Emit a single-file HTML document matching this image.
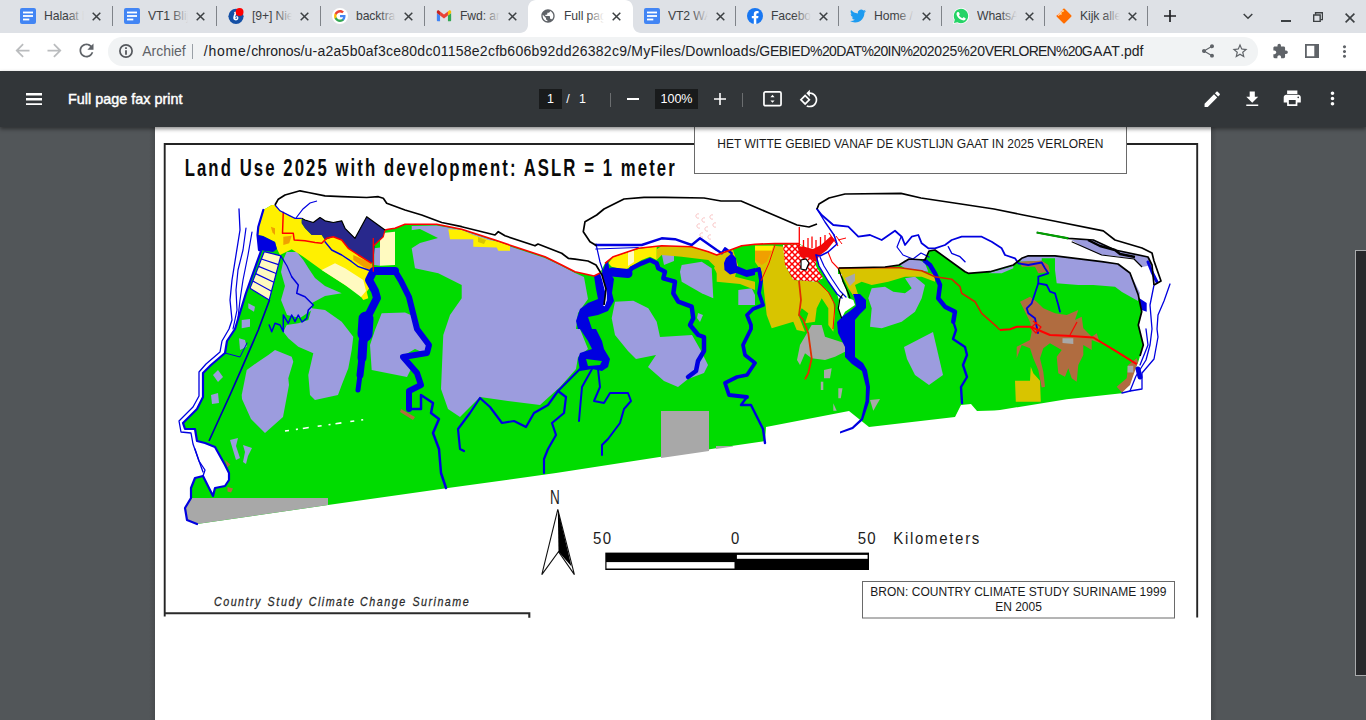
<!DOCTYPE html>
<html lang="nl">
<head>
<meta charset="utf-8">
<title>Full page fax print</title>
<style>
html,body{margin:0;padding:0}
body{width:1366px;height:720px;overflow:hidden;position:relative;background:#525659;font-family:"Liberation Sans",sans-serif}
.abs{position:absolute}
#tabstrip{position:absolute;left:0;top:0;width:1366px;height:33px;background:#dee1e6}
#toolbar{position:absolute;left:0;top:33px;width:1366px;height:38px;background:#fff}
#pdfbar{position:absolute;left:0;top:71px;width:1366px;height:56px;background:#323639;box-shadow:0 2px 4px rgba(0,0,0,.45)}
.tab{position:absolute;top:0;height:33px}
.tab .fav{position:absolute;left:11.5px;top:8px;width:16px;height:16px}
.tab .tt{position:absolute;left:35.5px;top:8px;height:16px;line-height:16px;font-size:12.2px;color:#3c4043;white-space:nowrap;overflow:hidden;width:43px;letter-spacing:-0.1px}
.tab .tt:after{content:"";position:absolute;right:0;top:0;width:20px;height:16px;background:linear-gradient(90deg,rgba(222,225,230,0),#dee1e6 85%)}
.tab.act .tt:after{background:linear-gradient(90deg,rgba(255,255,255,0),#fff 85%)}
.tab .x{position:absolute;left:83.300px;top:12px;width:9px;height:9px}
.sep{position:absolute;top:6px;width:1px;height:20px;background:#7f8389}
#omni{position:absolute;left:108px;top:4px;width:1150px;height:28.600px;border-radius:14.300px;background:#f1f3f4}
#url{position:absolute;left:95.800px;top:0;height:28px;line-height:28px;font-size:14px;color:#202124;white-space:nowrap;transform-origin:0 50%}
#arch{position:absolute;left:34.200px;top:0;height:28px;line-height:28px;font-size:14px;color:#5f6368;white-space:nowrap;transform-origin:0 50%}
#ptitle{position:absolute;left:68px;top:0;height:56px;line-height:57px;font-size:14.4px;color:#fff;white-space:nowrap;transform-origin:0 50%;-webkit-text-stroke:0.45px #fff}
.pbox{position:absolute;top:18px;height:20px;background:#191b1c;color:#fff;font-size:12.5px;line-height:20px;text-align:center}
.ptxt{position:absolute;top:18px;height:20px;color:#fff;font-size:12.5px;line-height:20px}
.psep{position:absolute;top:21.5px;width:1px;height:14px;background:#6b6e70}
svg{display:block}
</style>
</head>
<body>
<svg class="abs" style="left:0;top:0" width="1366" height="720" viewBox="0 0 1366 720">
<defs><linearGradient id="psh" x1="0" x2="1"><stop offset="0" stop-color="#3e4144"/><stop offset="1" stop-color="#525659"/></linearGradient><pattern id="hatch" width="6" height="6" patternUnits="userSpaceOnUse"><rect width="6" height="6" fill="#fff"/><path d="M0 0L6 6M0 6L6 0" stroke="#f00" stroke-width="1.500"/></pattern></defs>
<rect x="1211" y="127" width="6" height="593" fill="url(#psh)" opacity=".6"/>
<rect x="149" y="127" width="6" height="593" fill="url(#psh)" opacity=".5" transform="translate(304 0) scale(-1 1)"/>
<rect x="155" y="120" width="1056" height="600" fill="#fff"/>
<path d="M164.700 616.500V144H1197.200V617.500" fill="none" stroke="#242424" stroke-width="1.900"/>
<path d="M164.100 613.300H529.300V617.800" fill="none" stroke="#2a2a2a" stroke-width="2.100"/>
<polygon points="263.3,210 271.7,205 275,205 280,210.8 290,215.8 295,218.3 301.7,218.3 305,220 313.3,222.5 320,217.5 325,220.8 333.3,222.5 341.7,220.8 345,228.3 355,238.3 366.7,216.7 385,230 388.3,229.2 395,228.3 405,224.2 436.7,224.2 461.7,229.2 495,240 511.7,245.8 545,256.7 561.7,265 575,271.7 594,276 600,273 605,263.3 613.3,256.7 638.3,248.3 661.7,245.8 691.7,246.7 708.3,251.7 716.7,255 728.3,250.8 741.7,245.8 755,244.2 775,243.5 799,243.6 829,261 839,268 885,267 899,265 909,259 925,260 929,251 935,250 965,271.7 968.3,273.3 990,271.7 1013.3,265 1021.7,258.3 1028.3,255.8 1055,255.8 1101.7,261.7 1118,264 1130,273 1138.3,295 1141.7,311.7 1138.3,325 1143.3,345 1138.3,361.7 1133.3,373.3 1121.7,393.3 1066.7,399.2 1000,410 994,410.5 977,411 971,404 961,405 955,417 869,427 849,411 766,427 765,441 721,447.5 556,473 448,488 328,505 197,524 187,520 185,508 191,498 191,488 195,478 203,476 207,484 213,496 215,488 225,486 229,480 229,473 225,465 215,447 205,443 197,441 195,429 185,429 183,423 197,409 203,397 203,373 211,365 225,353 227,341 235,329 246,293 261,251 259,250 258,235 258,229" fill="#00dc00"/>
<polygon points="275,350 291.7,356.7 293.3,361.7 288.3,378.3 289,385 283,417 265,433 251,419 242,399 241.7,395 246.7,370 258.3,361.7 268.3,355" fill="#9c9cde"/>
<polygon points="311.7,308.3 325,310 341.7,321.7 353.3,336.7 351.7,350 348.3,368.3 341.7,385 338,395 315,400 310,395 308.3,375 313.3,353.3 298.3,346.7 288.3,338.3 283.3,331.7 286.7,325 298.3,323.3 308.3,320" fill="#9c9cde"/>
<polygon points="286.7,252 296.7,252 303.3,260 308.3,268 315,278 325,286 341.7,293.3 325,296 312,303 312,310 300,318 287,315 281,300 285,286 281,272 284,258" fill="#9c9cde"/>
<polygon points="381.7,313.3 405,312.5 413,316 417,329 429,345 429,355 415,349 401,357 411,369 407,377 371.7,370 370,345 375,330" fill="#9c9cde"/>
<polygon points="248.3,303.3 255,306.7 254,311.7 248.3,308.3" fill="#9c9cde"/>
<polygon points="241.7,320 250,319 250,326.7 241.7,328.3" fill="#9c9cde"/>
<polygon points="239,338.3 245,340 246.7,346.7 240,350" fill="#9c9cde"/>
<polygon points="411.7,226 436.7,225.5 461.7,230 495,241 511.7,247 545,258 561.7,266 575,273 584,277 588,299 578,313 576,329 580,329 588,349 578,357 576,369 560,387 540,405 508,401 480,397 460,417 448,409 441,389 443,341 443.3,335 450,315 461.7,298.3 461.7,285 438.3,273.3 415,268.3 411.7,248.3" fill="#9c9cde"/>
<polygon points="615,301.7 633.3,300.8 648.3,308.3 656.7,321.7 660,337 692,335 700,349 708,365 704,373 688,379 678,387 664,381 648,367 656,355 636,359 628,351 615,335 611.7,318.3" fill="#9c9cde"/>
<polygon points="681.7,265 701.7,261.7 711.7,268.3 713.3,298.3 701.7,293.3 681.7,281.7 680,271.7" fill="#9c9cde"/>
<polygon points="662,255 674,255 674,261 664,265" fill="#9c9cde"/>
<polygon points="738.3,290 751.7,288.3 755,295 755,305 738.3,305" fill="#9c9cde"/>
<polygon points="698,313 703,315 700,322 697,318" fill="#9c9cde"/>
<polygon points="871.7,288.3 885,286.7 893.3,291.7 905,293.3 911.7,288.3 905,278.3 915,276.7 925,285 921.7,298.3 915,311.7 901.7,321.7 881.7,328.3 870,326.7 871.7,308.3 868.3,298.3" fill="#9c9cde"/>
<polygon points="900,265 905,260 918.3,259.2 925,263.3 928.3,271.7 905,268.3" fill="#9c9cde"/>
<polygon points="904,347 933,332 943,375 929,385 915,375 907,359" fill="#9c9cde"/>
<polygon points="1021.7,258.3 1028.3,256 1055,256 1101.7,261.7 1118,264 1130,273 1140,293 1138,301 1122,292 1115,286.7 1093.3,285 1078.3,285 1056.7,283.3 1055,270 1055,258.3 1041.7,258.3 1041.7,260.8 1020,261.7" fill="#9c9cde"/>
<polygon points="988.3,273.3 1013.3,266 1013.3,268.3 1001.7,273.3" fill="#9c9cde"/>
<polygon points="1068.3,238.3 1071.7,240 1093.3,240 1115,250 1148,257 1152,265 1142,267 1134,259 1115,256 1101.7,255 1085,248" fill="#9c9cde"/>
<polygon points="213,375 218,370 223,377 218,382" fill="#9c9cde"/>
<polygon points="211,395 218,393 219,403 212,404" fill="#9c9cde"/>
<polygon points="398,232 420,229 438,238 420,243 411.7,248.3 405,240" fill="#00dc00"/>
<polygon points="230,440 238,438 236,446 240,458 236,460 233,450" fill="#9c9cde"/>
<polygon points="243,445 252,448 248,456 246,464 243,462 245,452" fill="#9c9cde"/>
<polygon points="224.7,459.7 230.3,464.4 227.5,467.2" fill="#b06c40"/>
<polygon points="227.5,486.9 233,488.5 231,492.5 227.5,491.5" fill="#b06c40"/>
<polygon points="401,409 415,417 413,420 400,412" fill="#b06c40"/>
<polyline points="285,431 368,419" fill="none" stroke="#fff" stroke-width="1.6" stroke-dasharray="4 7 2 5 6 9"/>
<polygon points="191,498 328,498 328,505 197,524 187,520 185,508" fill="#a8a8a8"/>
<polygon points="661,411 709,411 709,451 661,458" fill="#a8a8a8"/>
<polygon points="716,446 733,446 733,446.5 716,449" fill="#a8a8a8"/>
<polygon points="800,345 811.7,325 821.7,325 825,336.7 845,343.3 845,351.7 835,356.7 825,360 811.7,358.3 805,353.3 800,365 797,360" fill="#a8a8a8"/>
<polygon points="824,370 831.7,368.3 830,378.3 824,378.3" fill="#a8a8a8"/>
<polygon points="838.3,388.3 842.5,388.3 840.8,398.3 838.3,398.3" fill="#a8a8a8"/>
<polygon points="820.8,381.7 823.3,381.7 823.3,390 820.8,390" fill="#a8a8a8"/>
<polygon points="833.3,403.3 836.7,410.8 833.3,410.8" fill="#a8a8a8"/>
<polygon points="870,400 880,399 873.3,410.8" fill="#a8a8a8"/>
<polygon points="755,245.8 773.3,245.8 785,246.7 785,265 793.3,280 816.7,281.7 826.7,290 833.3,301.7 835,315 833.3,331.7 828.3,325 828.3,308.3 821.7,298.3 816.7,308.3 815,321.7 805,323.3 808.3,313.3 801.7,308.3 798.3,315 805,331.7 796.7,330 793.3,321.7 771.7,328.3 766.7,315 763.3,285 761.7,271.7 755,262" fill="#d8c400"/>
<polygon points="721,255 727,262 721,268 728,276 721,281 714,268" fill="#d8c400"/>
<polygon points="656.7,249.2 661.7,246 691.7,247 708.3,252 716.7,255.5 728.3,251.5 733,250 738,265 735,276.7 755,281.7 755,290 740,284 716.7,281.7 716.7,268.3 708.3,260 681.7,256.7 661.7,255 656.7,260" fill="#d8c400"/>
<polygon points="838.3,268.5 898.3,267.5 921.7,270.8 935,275 935,281.7 921.7,276.7 905,276.7 888.3,281.7 871.7,285 861.7,281.7 855,285 858.3,295 855,298.3 848.3,288.3 843.3,278.3" fill="#d8c400"/>
<polygon points="1015,380.8 1030,380.8 1030.8,366.7 1033.3,373.3 1040,380.8 1040.8,401.7 1015.8,401.7" fill="#d8c400"/>
<polygon points="736,249 751.7,246.7 751.7,260 741,265 738,262" fill="#00dc00"/>
<polygon points="755,245.8 773.3,245.8 771.7,250.8 755,250.8" fill="#fff000"/>
<polygon points="755,250.8 771.7,250.8 766.7,261.7 761.7,265 755,260" fill="#f0a000"/>
<polygon points="845,278 855,273.5 855,281 850,286" fill="#a8a8a8"/>
<polygon points="1020,261.7 1041.7,260.8 1048.3,265 1050,271.7 1038.3,273.3 1035,266.7 1021.7,266.7" fill="#b06c40"/>
<polygon points="1020,301.7 1030,296.7 1036.7,301.7 1043.3,308.3 1055,313.3 1066.7,315 1078.3,310 1075,320 1081.7,316.7 1083.3,328.3 1091.7,336.7 1096.7,333.3 1100,343.3 1091.7,340 1091.7,350 1083.3,345 1083.3,355 1078.3,365 1076.7,381.7 1071.7,378.3 1068.3,368.3 1065,376.7 1058.3,373.3 1056.7,356.7 1061.7,350 1050,343.3 1043.3,348.3 1040,358.3 1043.3,371.7 1045,386.7 1041.7,387.5 1038.3,370 1033.3,358.3 1030,348.3 1021.7,345 1016.7,358.3 1016.7,346.7 1030,340 1031.7,331.7 1030,322 1025,311.7" fill="#b06c40"/>
<polygon points="1116.7,386.7 1126.7,378.3 1128.3,365 1136.7,358.3 1138,362 1130,385 1122,392.5" fill="#b06c40"/>
<polygon points="1127.5,365.8 1133.3,365.8 1133.3,372.5 1127.5,372.5" fill="#a8a8a8"/>
<polygon points="1062.5,338.3 1073.3,338.3 1073.3,344 1062.5,343" fill="#a8a8a8"/>
<polygon points="271.7,205 275,205 280,210.8 290,215.8 295,218.3 301.7,218.3 301.7,223.3 305,228.3 311.7,235 321.7,235 325,240 333.3,236.7 341.7,240 348.3,248.3 358.3,255 371.7,263.3 373.3,271.7 366.7,278.3 371.7,285 366.7,291.7 368.3,298.3 363.3,300 358.3,293.3 345,285 321.7,270 303.3,256.7 291.7,249.2 280,255 276.7,248.3 275,242 263,236 257.5,235 258.3,226.7 263.3,210" fill="#fff000"/>
<polygon points="321.7,270 335,263.3 345,268.3 363.3,280 366,291 361,297 345,285" fill="#fffac0"/>
<polygon points="380,233.3 395,231.7 395,265 380,265.8" fill="#fffac0"/>
<polygon points="374.2,248.3 380,247.5 380,265.8 374.2,265" fill="#9c9cde"/>
<polygon points="283.3,236.7 291.7,235.8 289.2,243.3 283.3,245" fill="#f0a000"/>
<polygon points="270.8,226.7 275,228.3 275,235 272.5,232.5" fill="#f0a000"/>
<polygon points="353.3,255 371.7,263.3 372.5,271.7 363.3,266.7 353.3,260" fill="#f0a000"/>
<polygon points="264.2,251.7 280.8,255.8 269.2,300 250,288.3" fill="#fffac0"/>
<polygon points="301.7,219.2 305,220 313.3,222.5 320,217.5 325,220.8 333.3,222.5 341.7,220.8 345,228.3 355,238.3 366.7,216.7 385,230 383.3,236.7 375,245 373.3,261.7 371.7,263.3 358.3,255 348.3,248.3 341.7,240 333.3,236.7 325,240 321.7,235 311.7,235 305,228.3 301.7,223.3" fill="#28288c"/>
<polygon points="258,235 263,236 275,242 277,249 273,252 259,250" fill="#0000e0"/>
<polygon points="448.3,229.2 461.7,230 473.3,235 488.3,240 498.3,241.7 510,245.8 510,250.8 498.3,250.8 496.7,247.5 473.3,246.7 473.3,239.2 450,239.2" fill="#fff000"/>
<polygon points="478,237 486,240 484,244 478,242" fill="#d8c400"/>
<polygon points="608.3,263.3 613.3,257 638.3,249 656.7,246.5 656.7,260 650,256.7 641.7,260 625,270 611.7,266.7" fill="#fff000"/>
<polygon points="628,252 634,250.5 634,262 628,266" fill="#fffac0"/>
<polygon points="800,243 836,233 840,268 838,267 838,274 842,274 842,281 846,289 848,298 853.3,300 855,305 845,311.7 841.7,318.3 838.3,308.3 839,300 837,294 828,281 819,266 816,253 811,249" fill="#fff"/>
<polygon points="783,245 799,244 816,253 816,266 823,278 816.7,281.7 793.3,280 785,265" fill="url(#hatch)"/>
<polygon points="797,246 805,247 813,249 821,245 831,236 835,240 827,250 819,256 816,262 809,257.5 801,257.5" fill="#f00808"/>
<polyline points="799.3,227 799.3,246" fill="none" stroke="#ff0000" stroke-width="1.3" />
<polyline points="803.5,240 803.5,248" fill="none" stroke="#ff0000" stroke-width="1.3" />
<polyline points="808,238 808,248" fill="none" stroke="#ff0000" stroke-width="1.3" />
<polyline points="812,236.5 812,248" fill="none" stroke="#ff0000" stroke-width="1.3" />
<polyline points="816,240 816,250" fill="none" stroke="#ff0000" stroke-width="1.3" />
<polyline points="820.5,237 820.5,247" fill="none" stroke="#ff0000" stroke-width="1.3" />
<polyline points="825,235 825,244" fill="none" stroke="#ff0000" stroke-width="1.3" />
<polyline points="829,233 838,246" fill="none" stroke="#ff0000" stroke-width="1.1" />
<polyline points="836,236 842,244" fill="none" stroke="#ff0000" stroke-width="1.0" />
<polyline points="838,240 846,238" fill="none" stroke="#ff0000" stroke-width="1.0" />
<polyline points="828,252 832,262 838.3,268.5" fill="none" stroke="#ff0000" stroke-width="1.1" />
<polygon points="801,260 806,259 809,263 806,270 801,269" fill="#fff" stroke="#000" stroke-width="1.2"/>
<polyline points="264.2,251.7 280.8,255.8" fill="none" stroke="#0000e0" stroke-width="1.2" />
<polyline points="261.36,259.02 278.48,264.64" fill="none" stroke="#0000e0" stroke-width="1.2" />
<polyline points="258.52,266.34 276.16,273.48" fill="none" stroke="#0000e0" stroke-width="1.2" />
<polyline points="255.68,273.66 273.84,282.32" fill="none" stroke="#0000e0" stroke-width="1.2" />
<polyline points="252.84,280.98 271.52,291.16" fill="none" stroke="#0000e0" stroke-width="1.2" />
<polyline points="250,288.3 269.2,300" fill="none" stroke="#0000e0" stroke-width="1.2" />
<polyline points="264.2,251.7 250,288.3" fill="none" stroke="#0000e0" stroke-width="1.2" />
<polyline points="280.8,255.8 269.2,300" fill="none" stroke="#0000e0" stroke-width="1.2" />
<polyline points="263.3,210 258.3,226.7 257.5,235 259,250 261,251 246,293 235,329 227,341 225,353 211,365 203,373 203,397 197,409 183,423 185,429 195,429 197,441 205,443 215,447 225,465 229,473 229,480 225,486 215,488 213,496 207,484 203,476 195,478 191,488 191,498 185,508 187,520 197,524" fill="none" stroke="#0000e0" stroke-width="2.2" stroke-linejoin="round" stroke-linecap="round"/>
<polyline points="239,209 240,230 236,255 232,280 230,300 232,320 229,329 222,341 220,352 206,364 199,372 199,396 193,407 179,421 181,432 191,433 193,444 199,461 203,472" fill="none" stroke="#0000e0" stroke-width="1.3" stroke-linejoin="round" stroke-linecap="round"/>
<polyline points="246,228 243,250 238,270 236,290 237,310 233,329" fill="none" stroke="#0000e0" stroke-width="1.2" stroke-linejoin="round" stroke-linecap="round"/>
<polyline points="252,232 248,255 243,280 240,300 238,318" fill="none" stroke="#0000e0" stroke-width="1.2" stroke-linejoin="round" stroke-linecap="round"/>
<polyline points="195,449 199,461 205,470 203,476" fill="none" stroke="#0000e0" stroke-width="1.3" stroke-linejoin="round" stroke-linecap="round"/>
<polyline points="269.5,300 258.3,330 241.7,368.3 230,395 209,441" fill="none" stroke="#0000b4" stroke-width="1.7" />
<polyline points="225,353 240,357 247,343" fill="none" stroke="#0000e0" stroke-width="1.0" stroke-linejoin="round" stroke-linecap="round"/>
<polyline points="365,333 363,342 362,358" fill="none" stroke="#0000e0" stroke-width="9" stroke-linejoin="round" stroke-linecap="round"/>
<polyline points="362,358 360,375" fill="none" stroke="#0000e0" stroke-width="7" stroke-linejoin="round" stroke-linecap="round"/>
<polyline points="360,375 358,390" fill="none" stroke="#0000e0" stroke-width="5" stroke-linejoin="round" stroke-linecap="round"/>
<polyline points="373,272 369,280 375,291 377,298 372,308 366,320" fill="none" stroke="#0000e0" stroke-width="8" stroke-linejoin="round" stroke-linecap="round"/>
<polyline points="366,319 365,334" fill="none" stroke="#0000e0" stroke-width="15" stroke-linejoin="round" stroke-linecap="round"/>
<polyline points="374,271 395,271" fill="none" stroke="#0000e0" stroke-width="8" stroke-linejoin="round" stroke-linecap="round"/>
<polyline points="395,271 401,281 409,297 413,313 417,329 429,345 427,353 403,357 417,373 421,385 409,391 409,409" fill="none" stroke="#0000e0" stroke-width="6" stroke-linejoin="round" stroke-linecap="round"/>
<polyline points="409,409 421,409 421,395 433,403 431,413 439,419 433,433 439,449 441,473 446,488" fill="none" stroke="#0000e0" stroke-width="2.5" stroke-linejoin="round" stroke-linecap="round"/>
<polyline points="325,241.7 331.7,250 341.7,255 351.7,261.7 358.3,266.7 368.3,270 372,271" fill="none" stroke="#0000e0" stroke-width="1.4" stroke-linejoin="round" stroke-linecap="round"/>
<polyline points="291.7,276.7 298.3,285 296.7,293.3 305,296.7 313.3,305 308.3,310 306.7,318.3 302,322 298.3,315 295,321.7 291.7,315 288.3,323.3 283.3,315 283.3,331.7 280,325 275,323.3 271.7,331.7 269.2,325" fill="none" stroke="#0000e0" stroke-width="1.5" stroke-linejoin="round" stroke-linecap="round"/>
<polyline points="280.8,255.8 287,266 291.7,276.7" fill="none" stroke="#0000e0" stroke-width="1.3" stroke-linejoin="round" stroke-linecap="round"/>
<polygon points="606,262 608,261 610,273 614,279 612,293 614,301 608,311 598,315 588,317 592,329 596,329 602,341 604,349 610,359 608,367 602,371 592,369 580,371 578,359 580,353 592,349 588,341 580,329 578,329 576,321 580,309 588,303 598,299 596,289 594,276 602,273" fill="#0000e0"/>
<polygon points="586,359 602,361 600,365 588,366" fill="#00dc00"/>
<polyline points="599,267 603,280 606,292 606,300 604,306" fill="none" stroke="#fff" stroke-width="1.6" />
<polyline points="580,369 568,381 558,391 548,405 534,413 526,427 514,421 502,423 490,407 480,398 470,413 458,429 460,449 464,451" fill="none" stroke="#0000e0" stroke-width="2.2" stroke-linejoin="round" stroke-linecap="round"/>
<polyline points="566,397 564,413 552,423 556,435 548,449 544,459 544,473" fill="none" stroke="#0000e0" stroke-width="2.2" stroke-linejoin="round" stroke-linecap="round"/>
<polyline points="558,391 566,397" fill="none" stroke="#0000e0" stroke-width="2.2" stroke-linejoin="round" stroke-linecap="round"/>
<polyline points="592,369 582,387 580,409 579,421" fill="none" stroke="#0000e0" stroke-width="2" stroke-linejoin="round" stroke-linecap="round"/>
<polyline points="598,369 600,387 594,401 604,403 610,393 628,393 631,401 624,409 620,423 608,439 602,445 602,455" fill="none" stroke="#0000e0" stroke-width="2" stroke-linejoin="round" stroke-linecap="round"/>
<polyline points="612,272 628,273.5" fill="none" stroke="#0000e0" stroke-width="9" stroke-linejoin="round" stroke-linecap="round"/>
<polyline points="628.3,273.3 631.7,268.3 641.7,263.3 650,260 656.7,263.3 658.3,268.3 665,271.7 663.3,278.3 675,281.7 673.3,293.3 678.3,301.7 691.7,306.7 693.3,318.3 690,325 698.3,335 704,337 704,351 698,361 696,371 688,377" fill="none" stroke="#0000e0" stroke-width="4.5" stroke-linejoin="round" stroke-linecap="round"/>
<polyline points="595.8,245 641.7,245 661.7,238.3 675,239.2 691.7,245 700,238.3 716.7,250 721.7,253.3 725,248.3 731.7,253.3" fill="none" stroke="#0000e0" stroke-width="2.4" stroke-linejoin="round" stroke-linecap="round"/>
<polyline points="595.8,249 638.3,247.5" fill="none" stroke="#0000e0" stroke-width="1.2" stroke-linejoin="round" stroke-linecap="round"/>
<polyline points="596,244 600,262 606,280" fill="none" stroke="#0000e0" stroke-width="1.2" stroke-linejoin="round" stroke-linecap="round"/>
<polyline points="746.7,273.5 759,269 761,281 759,293 763,305 753,309 747,315 751,325 751,329 743,345 745,355 755,363 747,375 737,377 725,383 729,395 747,397" fill="none" stroke="#0000e0" stroke-width="3.8" stroke-linejoin="round" stroke-linecap="round"/>
<polyline points="747,397 741,405 751,405 757,417 763,429 765,443" fill="none" stroke="#0000e0" stroke-width="2.4" stroke-linejoin="round" stroke-linecap="round"/>
<polygon points="726,258 731.7,253.3 736,258 737,266 746.7,270 755,268 755,275 746.7,277 736,273 730,274.5 724.5,270 724,263" fill="#0000e0"/>
<polygon points="853,294 860,294 866,300 866,308 860,314 855,320 855,333 855,347 855,357 863,363 867,370 870,387 869,402 863,420 853,429 840,433.5 840,431.5 852,427 861,418.5 865.5,401 866,387 862,371 852,364 845,357 845,347 838,333 837,322 843,316 850,311 856,306 855,300" fill="#0000e0"/>
<polyline points="816,255 819,266 828,281 837,294 842,298" fill="none" stroke="#0000e0" stroke-width="1.4" stroke-linejoin="round" stroke-linecap="round"/>
<polyline points="820,257 824,266 832,279 840,291 846,297" fill="none" stroke="#0000e0" stroke-width="1.2" stroke-linejoin="round" stroke-linecap="round"/>
<polyline points="834,235 837,244 828,252 820,256 816,255" fill="none" stroke="#0000e0" stroke-width="1.6" stroke-linejoin="round" stroke-linecap="round"/>
<polyline points="817,209 825,222 834,235" fill="none" stroke="#0000e0" stroke-width="1.4" stroke-linejoin="round" stroke-linecap="round"/>
<polyline points="925,261 930,265 935,273.3 940,285 938.3,298.3 945,306.7 955,311.7 953.3,321.7" fill="none" stroke="#0000e0" stroke-width="4.5" stroke-linejoin="round" stroke-linecap="round"/>
<polyline points="953.3,321.7 956,330 953,339 965,347 967,355 963,365 967,377 961,387 962,403" fill="none" stroke="#0000e0" stroke-width="2.4" stroke-linejoin="round" stroke-linecap="round"/>
<polyline points="817,209 821.7,215 833.3,225 848.3,226.7 858.3,236.7 870,235 881.7,240 895,230.8 901.7,236.7 905,245 911.7,236.7 918.3,235 921.7,243.3 928.3,248.3 935,248.3 945,245 951.7,240 961.7,236.7 981.7,236.7 991.7,241.7 1001.7,248.3 1005,255 1015,258.3 1018.3,263.3 1028.3,265 1041.7,262.5 1045,268.3 1048.3,273.3 1038.3,276.7 1038.3,283.3 1046.7,285 1050,291.7 1055,293.3 1058.3,305 1060,311.7" fill="none" stroke="#0000e0" stroke-width="1.8" stroke-linejoin="round" stroke-linecap="round"/>
<polyline points="1038.3,283.3 1035,293.3 1031.7,303.3 1026.7,308.3 1028.3,313.3 1035,318.3 1036.7,326.7 1038,333" fill="none" stroke="#0000e0" stroke-width="1.8" stroke-linejoin="round" stroke-linecap="round"/>
<polyline points="901,237 897,247 903,255 913,259 921,253 929,257" fill="none" stroke="#0000e0" stroke-width="1.2" stroke-linejoin="round" stroke-linecap="round"/>
<polyline points="948.3,246.7 951.7,253.3 960,256.7 965,261.7" fill="none" stroke="#0000e0" stroke-width="1.4" stroke-linejoin="round" stroke-linecap="round"/>
<polyline points="1170,284 1164,301 1158,315 1157,329 1158,337 1154,359 1142,373 1142,389 1130,391 1122,393" fill="none" stroke="#0000e0" stroke-width="1.3" stroke-linejoin="round" stroke-linecap="round"/>
<polyline points="1154,285 1150,305 1152,329 1150,345 1146,360 1136,376 1130,391" fill="none" stroke="#0000e0" stroke-width="1.3" stroke-linejoin="round" stroke-linecap="round"/>
<polyline points="1146,329 1148,345 1140,365" fill="none" stroke="#0000e0" stroke-width="1.3" stroke-linejoin="round" stroke-linecap="round"/>
<polygon points="1139,298 1146.7,303 1146.7,311.7 1141.7,310" fill="#0000e0"/>
<polyline points="1138,369 1140,377" fill="none" stroke="#0000e0" stroke-width="5" stroke-linejoin="round" stroke-linecap="round"/>
<polyline points="1148,262 1152,272 1157,282" fill="none" stroke="#0000e0" stroke-width="3" stroke-linejoin="round" stroke-linecap="round"/>
<path d="M699 214a2.2 2.2 0 1 0 0 4" fill="none" stroke="#fbc8c8" stroke-width="1"/>
<path d="M705 218a2.2 2.2 0 1 0 0 4" fill="none" stroke="#fbc8c8" stroke-width="1"/>
<path d="M713 215a2.2 2.2 0 1 0 0 4" fill="none" stroke="#fbc8c8" stroke-width="1"/>
<path d="M700 224a2.2 2.2 0 1 0 0 4" fill="none" stroke="#fbc8c8" stroke-width="1"/>
<path d="M708 227a2.2 2.2 0 1 0 0 4" fill="none" stroke="#fbc8c8" stroke-width="1"/>
<path d="M716 223a2.2 2.2 0 1 0 0 4" fill="none" stroke="#fbc8c8" stroke-width="1"/>
<path d="M703 233a2.2 2.2 0 1 0 0 4" fill="none" stroke="#fbc8c8" stroke-width="1"/>
<path d="M711 235a2.2 2.2 0 1 0 0 4" fill="none" stroke="#fbc8c8" stroke-width="1"/>
<polyline points="385,230 388.3,229.2 395,228.3 405,224.2 436.7,224.2 461.7,229.2 495,240 511.7,245.8 545,256.7 561.7,265 575,271.7 594,276 600,273" fill="none" stroke="#ff0000" stroke-width="1.6" stroke-linejoin="round"/>
<polyline points="605,263.3 613.3,256.7 638.3,248.3 661.7,245.8 691.7,246.7 708.3,251.7 716.7,255 728.3,250.8 741.7,245.8 755,244.2 775,243.5 799,243.6" fill="none" stroke="#ff0000" stroke-width="1.6" stroke-linejoin="round"/>
<polyline points="838.3,268.3 898.3,267.5 921.7,270.8 935,276.7 951.7,279.2 960,286.7 961.7,293.3 975,301.7 981.7,313.3 996.7,326.7 1000,330" fill="none" stroke="#d02800" stroke-width="1.6" stroke-linejoin="round"/>
<polyline points="1000,330 1010,329.2 1016.7,326.7 1030,326.7 1038.3,330 1050,335 1066.7,335.8 1093.3,337.5 1116.7,351.7 1136.7,364.2" fill="none" stroke="#ff0000" stroke-width="2" stroke-linejoin="round"/>
<polyline points="1070,335 1077,322" fill="none" stroke="#ff0000" stroke-width="1.2" stroke-linejoin="round"/>
<polyline points="1033,321 1041,327 1036,333 1031,328 1037,322" fill="none" stroke="#ff0000" stroke-width="1.2" stroke-linejoin="round"/>
<polyline points="373.3,238 373.3,271.7" fill="none" stroke="#ff0000" stroke-width="1.3" stroke-linejoin="round"/>
<polyline points="373.3,246 383.3,236.7 385,230" fill="none" stroke="#ff0000" stroke-width="1.2" stroke-linejoin="round"/>
<polyline points="283.3,211.7 282.5,233.3 293.3,233.3 294.2,240 305,240.8 315,242.5 321.7,243.3 326.7,238.3 333.3,236.7 341.7,240 348.3,248.3 358.3,255 371.7,263.3" fill="none" stroke="#ff0000" stroke-width="1.5" stroke-linejoin="round"/>
<polyline points="775,245 769,263 761,281" fill="none" stroke="#ff0000" stroke-width="1.0" stroke-linejoin="round"/>
<polyline points="799,281 801,300 799,315 803.3,320 808.3,333.3 811.7,358.3 808.3,373.3 805,379.2" fill="none" stroke="#e03000" stroke-width="1.8" stroke-linejoin="round"/>
<polyline points="817,281 829,293 835,305 833,329" fill="none" stroke="#ff0000" stroke-width="1.0" stroke-linejoin="round"/>
<polyline points="301.7,218.3 305,220 313.3,222.5 320,217.5 325,220.8 333.3,222.5 341.7,220.8 345,228.3 355,238.3 366.7,216.7 385,230" fill="none" stroke="#000" stroke-width="1.2" stroke-linejoin="round"/>
<polyline points="275,205 280,210.8 290,215.8 295,218.3 301.7,218.3" fill="none" stroke="#0000e0" stroke-width="1.3" />
<polyline points="296,218 303,209 310,203 317,201" fill="none" stroke="#0000e0" stroke-width="1.2" />
<polyline points="275,205 278.3,199.2 285,195 300,190.8 308.3,192.5 325,195.8 341.7,196.7 366.7,197.5 378.3,196.7 383.3,198.3 386.7,203.3 405,210 421.7,215 441.7,222.5 461.7,226.7 495,235 498.3,231.7 505,235.8 535,245.8 538,244 561.7,253.3 568.3,258.3 575,259.2 588,261 596,265 602,275 606,289 604,305" fill="none" stroke="#000" stroke-width="1.7" stroke-linejoin="round"/>
<polyline points="596.7,245.8 590,241.7 583.3,231.7 585,221.7 596.7,215 604,209 624,199 644,197.4 664,197.4 704,198 721,201 741,201 769,213 797,225 809,227 817,224" fill="none" stroke="#000" stroke-width="1.7" stroke-linejoin="round"/>
<polyline points="817,209 819,204 829,198 845,194 901,193.4 921,198 961,204 994,209 1023.3,215 1054,221 1103.3,230.8 1115,240 1142,248 1152,253 1154,261 1161,281 1154,285" fill="none" stroke="#000" stroke-width="1.7" stroke-linejoin="round"/>
<polyline points="839,268 885,267 899,265 909,259 925,260 929,251 935,250 965,271.7 968.3,273.3 990,271.7 1013.3,265 1021.7,258.3 1028.3,255.8 1055,255.8 1101.7,261.7 1118,264 1130,273 1138.3,295 1141.7,311.7 1138.3,325 1143.3,345 1140,356" fill="none" stroke="#000" stroke-width="1.7" stroke-linejoin="round"/>
<polyline points="1036.7,232.5 1068.3,238.3 1093.3,240 1115,250 1148,257 1152,265 1154,285" fill="none" stroke="#000" stroke-width="1.7" stroke-linejoin="round"/>
<polyline points="1071.7,241.7 1101.7,255 1134,259 1142,267" fill="none" stroke="#000" stroke-width="1.2" stroke-linejoin="round"/>
<polyline points="1088,240 1100,246 1115,250 1120,254 1135,257" fill="none" stroke="#000" stroke-width="2.5" stroke-linejoin="round"/>
<polyline points="838.3,268.5 843.3,281.7 848.3,293.3 850,298.3" fill="none" stroke="#000" stroke-width="1.3" stroke-linejoin="round"/>
<polyline points="843,294 840,298.3 838.3,308.3 841.7,318.3" fill="none" stroke="#000" stroke-width="1.2" stroke-linejoin="round"/>
<polyline points="1036.7,232.5 1068.3,238.3" fill="none" stroke="#00a000" stroke-width="2.2" />
<text transform="translate(184.700 175.600) scale(0.700 1)" font-family="Liberation Sans, sans-serif" font-size="23.900" font-weight="bold" fill="#0a0a0a" textLength="700.0" lengthAdjust="spacing">Land Use 2025 with development: ASLR = 1 meter</text>
<rect x="694.500" y="120" width="432" height="53.500" fill="#fff" stroke="#6a6a6a" stroke-width="1"/>
<text x="717.200" y="147.700" font-family="Liberation Sans, sans-serif" font-size="12" fill="#1a1a1a" textLength="386.300" lengthAdjust="spacing">HET WITTE GEBIED VANAF DE KUSTLIJN GAAT IN 2025 VERLOREN</text>
<rect x="862.500" y="581.500" width="312" height="36.500" fill="#fff" stroke="#6a6a6a" stroke-width="1"/>
<text x="870.300" y="596.300" font-family="Liberation Sans, sans-serif" font-size="12" fill="#1a1a1a" textLength="296.100" lengthAdjust="spacing">BRON: COUNTRY CLIMATE STUDY SURINAME 1999</text>
<text x="1018.500" y="610.600" font-family="Liberation Sans, sans-serif" font-size="12" fill="#1a1a1a" text-anchor="middle">EN 2005</text>
<text transform="translate(214.0 606.200) scale(0.860 1)" font-family="Liberation Sans, sans-serif" font-size="12.500" font-style="italic" fill="#2a2a2a" stroke="#2a2a2a" stroke-width="0.250" textLength="54.0" lengthAdjust="spacing">Country</text>
<text transform="translate(267.4 606.200) scale(0.860 1)" font-family="Liberation Sans, sans-serif" font-size="12.500" font-style="italic" fill="#2a2a2a" stroke="#2a2a2a" stroke-width="0.250" textLength="39.8" lengthAdjust="spacing">Study</text>
<text transform="translate(308.7 606.200) scale(0.860 1)" font-family="Liberation Sans, sans-serif" font-size="12.500" font-style="italic" fill="#2a2a2a" stroke="#2a2a2a" stroke-width="0.250" textLength="52.7" lengthAdjust="spacing">Climate</text>
<text transform="translate(360.0 606.200) scale(0.860 1)" font-family="Liberation Sans, sans-serif" font-size="12.500" font-style="italic" fill="#2a2a2a" stroke="#2a2a2a" stroke-width="0.250" textLength="52.7" lengthAdjust="spacing">Change</text>
<text transform="translate(412.4 606.200) scale(0.860 1)" font-family="Liberation Sans, sans-serif" font-size="12.500" font-style="italic" fill="#2a2a2a" stroke="#2a2a2a" stroke-width="0.250" textLength="65.5" lengthAdjust="spacing">Suriname</text>
<text x="555" y="503.800" font-family="Liberation Sans, sans-serif" font-size="19.400" fill="#1c1c1c" text-anchor="middle" textLength="9.800" lengthAdjust="spacingAndGlyphs">N</text>
<path d="M557.800 509.300L541.800 574.600L558.500 551.700L574.400 574.600Z" fill="#fff" stroke="#111" stroke-width="1.100" stroke-linejoin="miter"/>
<path d="M557.800 509.300L558.500 551.700L571.500 566.500Z" fill="#000"/>
<rect x="605.300" y="552.600" width="263.700" height="17.400" fill="#000"/>
<rect x="606.500" y="562.100" width="128" height="6.400" fill="#fff"/>
<rect x="736.900" y="554.900" width="130.700" height="3.900" fill="#fff"/>
<text transform="translate(593.0 544.300) scale(0.900 1)" font-family="Liberation Sans, sans-serif" font-size="16.700" fill="#1c1c1c" textLength="20.1" lengthAdjust="spacing">50</text>
<text transform="translate(730.9 544.300) scale(0.900 1)" font-family="Liberation Sans, sans-serif" font-size="16.700" fill="#1c1c1c" textLength="9.2" lengthAdjust="spacingAndGlyphs">0</text>
<text transform="translate(857.8 544.300) scale(0.900 1)" font-family="Liberation Sans, sans-serif" font-size="16.700" fill="#1c1c1c" textLength="19.7" lengthAdjust="spacing">50</text>
<text transform="translate(893.3 544.300) scale(0.900 1)" font-family="Liberation Sans, sans-serif" font-size="16.700" fill="#1c1c1c" textLength="95.6" lengthAdjust="spacing">Kilometers</text>
</svg>
<div id="tabstrip">
<svg class="abs" style="left:519.5px;top:0" width="121" height="33" viewBox="0 0 121 33"><path fill="#fff" d="M0 33c4.400 0 8-3.600 8-8V8c0-4.400 3.600-8 8-8h89c4.400 0 8 3.600 8 8v17c0 4.400 3.600 8 8 8z"/></svg>
<div class="sep" style="left:112.0px"></div>
<div class="sep" style="left:216.0px"></div>
<div class="sep" style="left:320.0px"></div>
<div class="sep" style="left:424.0px"></div>
<div class="sep" style="left:735.0px"></div>
<div class="sep" style="left:838.0px"></div>
<div class="sep" style="left:941.0px"></div>
<div class="sep" style="left:1044.0px"></div>
<div class="sep" style="left:1147.0px"></div>
<div class="tab" style="left:8.5px;width:104px"><svg class="fav" viewBox="0 0 16 16"><rect x="0" y="0" width="16" height="16" rx="2" fill="#4285f4"/><rect x="3" y="3.6" width="10" height="1.8" fill="#fff"/><rect x="3" y="7.1" width="10" height="1.8" fill="#fff"/><rect x="3" y="10.6" width="6.3" height="1.8" fill="#fff"/></svg><div class="tt">Halaat b</div><svg class="x" viewBox="0 0 9 9"><path d="M0.700 0.700L8.300 8.300M8.300 0.700L0.700 8.300" stroke="#3c4043" stroke-width="1.500" fill="none"/></svg></div>
<div class="tab" style="left:112.5px;width:104px"><svg class="fav" viewBox="0 0 16 16"><rect x="0" y="0" width="16" height="16" rx="2" fill="#4285f4"/><rect x="3" y="3.6" width="10" height="1.8" fill="#fff"/><rect x="3" y="7.1" width="10" height="1.8" fill="#fff"/><rect x="3" y="10.6" width="6.3" height="1.8" fill="#fff"/></svg><div class="tt">VT1 Blijf</div><svg class="x" viewBox="0 0 9 9"><path d="M0.700 0.700L8.300 8.300M8.300 0.700L0.700 8.300" stroke="#3c4043" stroke-width="1.500" fill="none"/></svg></div>
<div class="tab" style="left:216.5px;width:104px"><svg class="fav" viewBox="0 0 16 16"><circle cx="8" cy="8.3" r="7.6" fill="#1550a5"/><path d="M6.2 4.2c1.3-.9 2.6-.5 2.4.9-.2 1.3-1.3 2.7-1.6 4.1 1.1-1.3 3.2-1.2 3.4.5.2 1.8-1.6 3-3.4 2.6-1.6-.4-2-2-1.6-3.6.3-1.300.9-2.500 1.100-3.400.1-.6-.3-.7-.8-.4zM7.300 10.600c.6.800 2 .300 1.900-.8-.1-.9-1.300-.8-1.900.1z" fill="#fff"/><circle cx="11.600" cy="4" r="3.900" fill="#f00"/></svg><div class="tt">[9+] Nieu</div><svg class="x" viewBox="0 0 9 9"><path d="M0.700 0.700L8.300 8.300M8.300 0.700L0.700 8.300" stroke="#3c4043" stroke-width="1.500" fill="none"/></svg></div>
<div class="tab" style="left:320.5px;width:104px"><svg class="fav" viewBox="0 0 16 16"><circle cx="8" cy="8" r="8" fill="#fff"/><g transform="translate(2.1 2.1) scale(0.2458)"><path fill="#4285f4" d="M46.500 24.500c0-1.600-.1-3.100-.4-4.500H24v9h12.700c-.6 3-2.300 5.500-4.800 7.200v6h7.700c4.500-4.200 6.900-10.300 6.900-17.700z"/><path fill="#34a853" d="M24 48c6.500 0 11.900-2.100 15.900-5.800l-7.700-6c-2.100 1.400-4.900 2.300-8.200 2.300-6.300 0-11.600-4.200-13.500-9.900H2.500v6.200C6.500 42.600 14.600 48 24 48z"/><path fill="#fbbc05" d="M10.500 28.600c-.5-1.400-.8-3-.8-4.600s.3-3.200.8-4.600v-6.200H2.500C.9 16.500 0 20.100 0 24s.9 7.500 2.500 10.800l8-6.200z"/><path fill="#ea4335" d="M24 9.500c3.500 0 6.700 1.200 9.200 3.600l6.900-6.900C35.900 2.400 30.500 0 24 0 14.600 0 6.500 5.400 2.500 13.200l8 6.200c1.900-5.700 7.200-9.900 13.500-9.900z"/></g></svg><div class="tt">backtrac</div><svg class="x" viewBox="0 0 9 9"><path d="M0.700 0.700L8.300 8.300M8.300 0.700L0.700 8.300" stroke="#3c4043" stroke-width="1.500" fill="none"/></svg></div>
<div class="tab" style="left:424.5px;width:104px"><svg class="fav" viewBox="-0.95 -0.950 17.900 17.900"><path fill="#4285f4" d="M1 13.800h2.600V7.400L0 4.700v8c0 .6.500 1.100 1 1.100z"/><path fill="#34a853" d="M12.400 13.800H15c.6 0 1-.5 1-1.100v-8l-3.600 2.700z"/><path fill="#fbbc04" d="M12.400 3v4.400L16 4.700V3.300c0-1.400-1.500-2.100-2.600-1.300z"/><path fill="#ea4335" d="M3.600 7.400V3L8 6.300 12.400 3v4.400L8 10.700z"/><path fill="#c5221f" d="M0 3.300v1.400l3.600 2.700V3L2.600 2C1.500 1.200 0 1.900 0 3.300z"/></svg><div class="tt">Fwd: art</div><svg class="x" viewBox="0 0 9 9"><path d="M0.700 0.700L8.300 8.300M8.300 0.700L0.700 8.300" stroke="#3c4043" stroke-width="1.500" fill="none"/></svg></div>
<div class="tab act" style="left:528.5px;width:104px"><svg class="fav" viewBox="0 0 24 24"><path fill="#5f6368" d="M12 2C6.480 2 2 6.480 2 12s4.480 10 10 10 10-4.480 10-10S17.520 2 12 2zm-1 17.930c-3.950-.49-7-3.850-7-7.930 0-.62.080-1.210.21-1.790L9 15v1c0 1.100.9 2 2 2v1.930zm6.900-2.540c-.26-.81-1-1.390-1.900-1.390h-1v-3c0-.55-.45-1-1-1H8v-2h2c.55 0 1-.45 1-1V7h2c1.100 0 2-.9 2-2v-.41c2.930 1.190 5 4.060 5 7.410 0 2.080-.8 3.970-2.100 5.390z"/></svg><div class="tt">Full page</div><svg class="x" viewBox="0 0 9 9"><path d="M0.700 0.700L8.300 8.300M8.300 0.700L0.700 8.300" stroke="#3c4043" stroke-width="1.500" fill="none"/></svg></div>
<div class="tab" style="left:632.5px;width:104px"><svg class="fav" viewBox="0 0 16 16"><rect x="0" y="0" width="16" height="16" rx="2" fill="#4285f4"/><rect x="3" y="3.6" width="10" height="1.8" fill="#fff"/><rect x="3" y="7.1" width="10" height="1.8" fill="#fff"/><rect x="3" y="10.6" width="6.3" height="1.8" fill="#fff"/></svg><div class="tt">VT2 WA</div><svg class="x" viewBox="0 0 9 9"><path d="M0.700 0.700L8.300 8.300M8.300 0.700L0.700 8.300" stroke="#3c4043" stroke-width="1.500" fill="none"/></svg></div>
<div class="tab" style="left:735.5px;width:104px"><svg class="fav" viewBox="0 0 16 16"><circle cx="8" cy="8" r="8" fill="#1877f2"/><path fill="#fff" d="M11.100 10.300l.4-2.300H9.300V6.500c0-.6.300-1.300 1.300-1.300h1V3.200s-.9-.2-1.800-.2C8 3 6.800 4.100 6.800 6.200V8h-2v2.300h2V16c.4.100.8.100 1.200.1s.9 0 1.300-.1v-5.700z"/></svg><div class="tt">Faceboo</div><svg class="x" viewBox="0 0 9 9"><path d="M0.700 0.700L8.300 8.300M8.300 0.700L0.700 8.300" stroke="#3c4043" stroke-width="1.500" fill="none"/></svg></div>
<div class="tab" style="left:838.5px;width:104px"><svg class="fav" viewBox="0 0 24 24"><path fill="#1d9bf0" d="M23.953 4.570a10 10 0 01-2.825.775 4.958 4.958 0 002.163-2.723c-.951.555-2.005.959-3.127 1.184a4.920 4.920 0 00-8.384 4.482C7.690 8.095 4.067 6.130 1.640 3.162a4.822 4.822 0 00-.666 2.475c0 1.710.870 3.213 2.188 4.096a4.904 4.904 0 01-2.228-.616v.060a4.923 4.923 0 003.946 4.827 4.996 4.996 0 01-2.212.085 4.936 4.936 0 004.604 3.417 9.867 9.867 0 01-6.102 2.105c-.390 0-.779-.023-1.170-.067a13.995 13.995 0 007.557 2.209c9.053 0 13.998-7.496 13.998-13.985 0-.210 0-.420-.015-.630A9.935 9.935 0 0024 4.590z"/></svg><div class="tt">Home / T</div><svg class="x" viewBox="0 0 9 9"><path d="M0.700 0.700L8.300 8.300M8.300 0.700L0.700 8.300" stroke="#3c4043" stroke-width="1.500" fill="none"/></svg></div>
<div class="tab" style="left:941.5px;width:104px"><svg class="fav" viewBox="0 0 16 16"><path fill="#fff" d="M0 16l1.100-4.100A8 8 0 118 16a8 8 0 01-3.800-1z"/><path fill="#25d366" d="M.9 15.100l.9-3.400a7.200 7.200 0 112.700 2.600z"/><path fill="#fff" d="M5.800 4.300c-.2-.4-.3-.4-.5-.4h-.4c-.2 0-.4.100-.6.300-.2.200-.8.800-.8 1.900s.8 2.200.9 2.300c.1.200 1.600 2.500 3.900 3.400 1.900.8 2.300.6 2.700.6.400 0 1.300-.5 1.500-1.100.2-.5.200-1 .1-1.100-.1-.1-.2-.1-.4-.3l-1.400-.7c-.2-.1-.4-.1-.5.100l-.6.800c-.1.100-.2.200-.5.100-.2-.1-1-.4-1.800-1.100-.7-.6-1.100-1.400-1.300-1.600-.1-.2 0-.4.100-.5l.3-.4c.1-.1.200-.2.200-.4.100-.1 0-.3 0-.4z"/></svg><div class="tt">WhatsAp</div><svg class="x" viewBox="0 0 9 9"><path d="M0.700 0.700L8.300 8.300M8.300 0.700L0.700 8.300" stroke="#3c4043" stroke-width="1.500" fill="none"/></svg></div>
<div class="tab" style="left:1044.5px;width:104px"><svg class="fav" viewBox="0 0 16 16"><rect x="2.400" y="2.400" width="11.200" height="11.200" rx="1" transform="rotate(45 8 8)" fill="#ff6d00"/><text x="0" y="0" transform="translate(2.800 8.200) rotate(-45)" font-family="Liberation Sans,sans-serif" font-size="4.200" font-weight="bold" fill="#fff">npo</text></svg><div class="tt">Kijk alle</div><svg class="x" viewBox="0 0 9 9"><path d="M0.700 0.700L8.300 8.300M8.300 0.700L0.700 8.300" stroke="#3c4043" stroke-width="1.500" fill="none"/></svg></div>
<svg class="abs" style="left:1164px;top:10px" width="12" height="12" viewBox="0 0 12 12"><path d="M6 0v12M0 6h12" stroke="#202124" stroke-width="1.700" fill="none"/></svg>
<svg class="abs" style="left:1243px;top:12.500px" width="10" height="7" viewBox="0 0 10 7"><path d="M0.700 1l4.300 4.300L9.300 1" stroke="#3c4043" stroke-width="1.500" fill="none"/></svg>
<div class="abs" style="left:1281px;top:20px;width:10px;height:1.500px;background:#3c4043"></div>
<svg class="abs" style="left:1313px;top:11.800px" width="10.200" height="10.200" viewBox="0 0 11 11"><path d="M0.750 3.250h7v7h-7z" stroke="#3c4043" stroke-width="1.500" fill="none"/><path d="M2.750 3V0.750h7.500v7.500H8" stroke="#3c4043" stroke-width="1.500" fill="none"/></svg>
<svg class="abs" style="left:1345px;top:12.500px" width="10" height="10" viewBox="0 0 10 10"><path d="M0.600 0.600L9.400 9.400M9.400 0.600L0.600 9.400" stroke="#3c4043" stroke-width="1.600" fill="none"/></svg>
</div>
<div id="toolbar">
<svg class="abs" style="left:11.5px;top:7px" width="21" height="21" viewBox="0 0 24 24"><path fill="#babcbe" d="M20 11H7.830l5.590-5.590L12 4l-8 8 8 8 1.410-1.410L7.830 13H20v-2z"/></svg>
<svg class="abs" style="left:43.5px;top:7px" width="21" height="21" viewBox="0 0 24 24"><path fill="#babcbe" d="M12 4l-1.410 1.410L16.170 11H4v2h12.170l-5.580 5.590L12 20l8-8z"/></svg>
<svg class="abs" style="left:75.8px;top:7px" width="21" height="21" viewBox="0 0 24 24"><path fill="#5f6368" d="M17.650 6.350C16.200 4.900 14.210 4 12 4c-4.420 0-7.990 3.580-7.990 8s3.570 8 7.990 8c3.730 0 6.840-2.550 7.730-6h-2.080c-.82 2.330-3.040 4-5.650 4-3.310 0-6-2.690-6-6s2.690-6 6-6c1.660 0 3.140.69 4.220 1.780L13 11h7V4l-2.350 2.350z"/></svg>
<div id="omni">
<svg class="abs" style="left:10px;top:6px" width="16" height="16" viewBox="0 0 16 16"><circle cx="8" cy="8" r="6.100" fill="none" stroke="#55585d" stroke-width="1.700"/><path fill="#55585d" d="M7.100 4.300h1.800v1.800H7.100zM7.100 7.200h1.800v4.500H7.100z"/></svg>
<div id="arch">Archief</div>
<div class="abs" style="left:84px;top:6.500px;width:1px;height:15px;background:#9aa0a6"></div>
<div id="url"><span style="letter-spacing:0.765px">/home/</span><span style="letter-spacing:-0.088px">chronos</span><span style="letter-spacing:0.256px">/u-a2a5b0af3ce80dc01158e2cfb606b92dd26382c9</span><span style="letter-spacing:0.247px">/MyFiles</span><span style="letter-spacing:0.134px">/Downloads</span><span style="letter-spacing:-0.357px">/GEBIED</span><span style="letter-spacing:-0.614px">%20DAT</span><span style="letter-spacing:-0.606px">%20IN%20</span><span style="letter-spacing:-0.139px">2025%20</span><span style="letter-spacing:-0.732px">VERLOREN%20</span><span style="letter-spacing:0.317px">GAAT</span><span style="letter-spacing:-0.065px">.pdf</span></div>
<svg class="abs" style="left:1092px;top:6px" width="16" height="16" viewBox="0 0 24 24"><path fill="#5f6368" d="M18 16.080c-.76 0-1.440.3-1.960.77L8.910 12.700c.05-.23.09-.46.09-.7s-.04-.47-.09-.7l7.050-4.110c.54.5 1.250.81 2.040.81 1.660 0 3-1.340 3-3s-1.340-3-3-3-3 1.340-3 3c0 .24.04.47.09.7L8.040 9.810C7.500 9.310 6.790 9 6 9c-1.660 0-3 1.340-3 3s1.340 3 3 3c.79 0 1.500-.31 2.040-.81l7.120 4.160c-.05.21-.08.43-.08.65 0 1.610 1.310 2.920 2.920 2.920 1.610 0 2.920-1.310 2.920-2.920s-1.310-2.920-2.920-2.920z"/></svg>
<svg class="abs" style="left:1123px;top:5px" width="18" height="18" viewBox="0 0 24 24"><path fill="#5f6368" d="M22 9.240l-7.190-.62L12 2 9.190 8.630 2 9.240l5.460 4.730L5.820 21 12 17.270 18.180 21l-1.630-7.030L22 9.240zM12 15.400l-3.760 2.270 1-4.280-3.320-2.880 4.380-.38L12 6.100l1.710 4.040 4.380.38-3.320 2.880 1 4.280L12 15.400z"/></svg>
</div>
<svg class="abs" style="left:1271.5px;top:9.7px" width="16.5" height="16.5" viewBox="0 0 24 24"><path fill="#5f6368" d="M20.500 11H19V7c0-1.100-.9-2-2-2h-4V3.500C13 2.120 11.880 1 10.500 1S8 2.120 8 3.500V5H4c-1.100 0-1.990.9-1.990 2v3.800H3.500c1.490 0 2.700 1.210 2.700 2.700s-1.210 2.700-2.700 2.700H2V20c0 1.100.9 2 2 2h3.800v-1.500c0-1.490 1.210-2.700 2.700-2.700 1.490 0 2.700 1.210 2.700 2.700V22H17c1.100 0 2-.9 2-2v-4h1.500c1.380 0 2.500-1.120 2.500-2.500S21.880 11 20.500 11z"/></svg>
<svg class="abs" style="left:1305px;top:11px" width="14" height="14" viewBox="0 0 14 14"><path fill="#5f6368" d="M0 0h14v14H0zM1.800 1.800v10.400H9.300V1.800z" fill-rule="evenodd"/></svg>
<svg class="abs" style="left:1335px;top:9px" width="19" height="19" viewBox="0 0 24 24"><path fill="#5f6368" d="M12 8c1.100 0 2-.9 2-2s-.9-2-2-2-2 .9-2 2 .9 2 2 2zm0 2c-1.100 0-2 .9-2 2s.9 2 2 2 2-.9 2-2-.9-2-2-2zm0 6c-1.100 0-2 .9-2 2s.9 2 2 2 2-.9 2-2-.9-2-2-2z"/></svg>
</div>
<div id="pdfbar">
<svg class="abs" style="left:25.800px;top:21.800px" width="16.400" height="12.700" viewBox="0 0 16.400 12.700"><path fill="#fff" d="M0 0h16.400v2.400H0zM0 5.100h16.400v2.400H0zM0 10.200h16.400v2.400H0z"/></svg>
<div id="ptitle">Full page fax print</div>
<div class="pbox" style="left:539px;width:23px">1</div>
<div class="ptxt" style="left:566.300px">/</div>
<div class="ptxt" style="left:579px">1</div>
<div class="psep" style="left:610px"></div>
<div class="abs" style="left:627px;top:27px;width:12px;height:1.600px;background:#fff"></div>
<div class="pbox" style="left:655px;width:43px">100%</div>
<svg class="abs" style="left:714px;top:22px" width="12" height="12" viewBox="0 0 12 12"><path d="M6 0v12M0 6h12" stroke="#fff" stroke-width="1.600" fill="none"/></svg>
<div class="psep" style="left:742px"></div>
<svg class="abs" style="left:763px;top:20.200px" width="19" height="16.150" viewBox="0 0 20 17"><rect x="1" y="1" width="18" height="14.500" rx="1.500" stroke="#fff" stroke-width="1.800" fill="none"/><path fill="#fff" d="M10 4l2.200 2.600H7.800zM10 12.500l2.200-2.600H7.800z"/></svg>
<svg class="abs" style="left:799px;top:18px" width="20" height="20" viewBox="0 0 24 24"><path fill="#fff" d="M7.340 6.410L.86 12.900l6.490 6.480 6.490-6.480-6.500-6.490zM3.690 12.900l3.660-3.660L11 12.900l-3.660 3.660-3.650-3.660zm15.670-6.260C17.610 4.880 15.300 4 13 4V.76L8.760 5 13 9.240V6c1.790 0 3.580.68 4.950 2.050 2.730 2.730 2.730 7.170 0 9.900C16.580 19.320 14.790 20 13 20c-.97 0-1.940-.21-2.840-.61l-1.490 1.490C10.020 21.620 11.510 22 13 22c2.300 0 4.610-.88 6.360-2.640 3.520-3.510 3.520-9.210 0-12.720z"/></svg>
<svg class="abs" style="left:1201.8px;top:17.5px" width="20.5" height="20.5" viewBox="0 0 24 24"><path fill="#fff" d="M3 17.250V21h3.750L17.810 9.940l-3.750-3.750L3 17.250zM20.710 7.040c.39-.39.39-1.020 0-1.410l-2.340-2.340c-.39-.39-1.020-.39-1.410 0l-1.830 1.830 3.750 3.750 1.830-1.830z"/></svg>
<svg class="abs" style="left:1242px;top:17.5px" width="20.5" height="20.5" viewBox="0 0 24 24"><path fill="#fff" d="M19 9h-4V3H9v6H5l7 7 7-7zM5 18v2h14v-2H5z"/></svg>
<svg class="abs" style="left:1281.7px;top:17px" width="20.5" height="20.5" viewBox="0 0 24 24"><path fill="#fff" d="M19 8H5c-1.660 0-3 1.340-3 3v6h4v4h12v-4h4v-6c0-1.660-1.340-3-3-3zm-3 11H8v-5h8v5zm3-7c-.55 0-1-.45-1-1s.45-1 1-1 1 .45 1 1-.45 1-1 1zm-1-9H6v4h12V3z"/></svg>
<svg class="abs" style="left:1321.5px;top:17px" width="21" height="21" viewBox="0 0 24 24"><path fill="#fff" d="M12 8c1.100 0 2-.9 2-2s-.9-2-2-2-2 .9-2 2 .9 2 2 2zm0 2c-1.100 0-2 .9-2 2s.9 2 2 2 2-.9 2-2-.9-2-2-2zm0 6c-1.100 0-2 .9-2 2s.9 2 2 2 2-.9 2-2-.9-2-2-2z"/></svg>
</div>
<div class="abs" style="left:1355px;top:249.500px;width:11px;height:426px;background:#28292c;border:1px solid #a9abad;border-right:none;box-sizing:border-box"></div>
</body>
</html>
